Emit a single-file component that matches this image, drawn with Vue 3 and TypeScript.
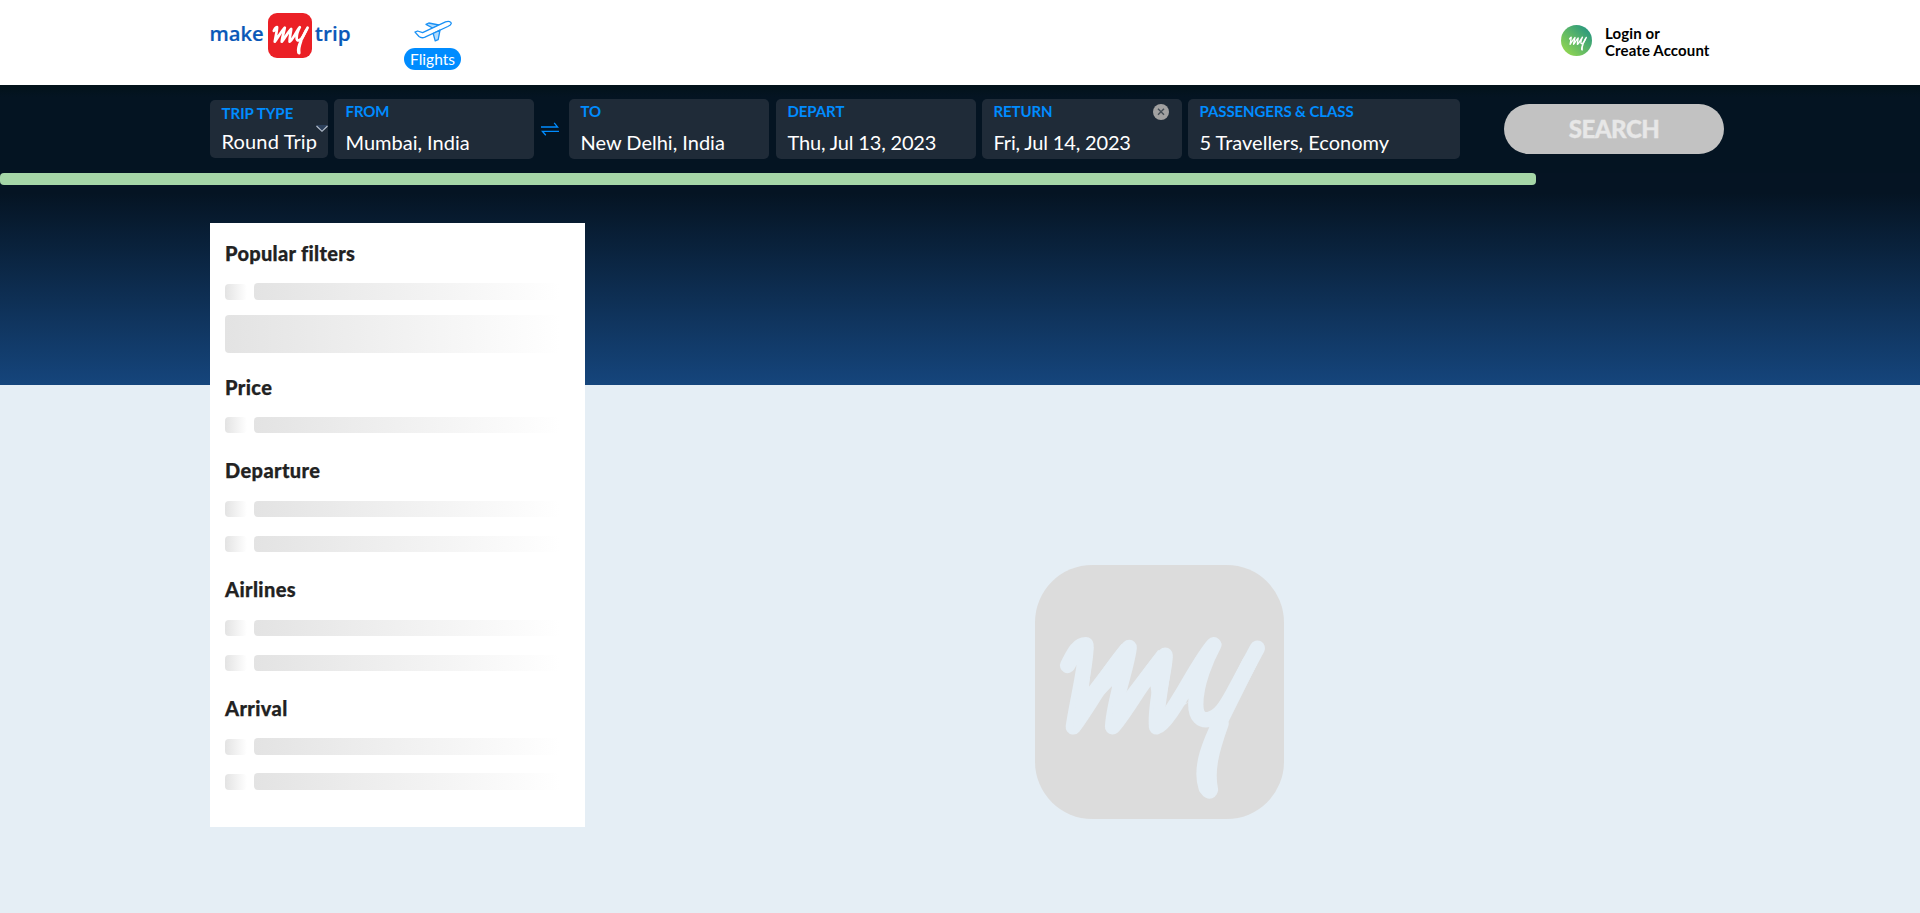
<script setup lang="ts">
interface Field {
  key: string
  label: string
  value: string
}

interface FilterGroup {
  title: string
  kind: string
  rows: number
  block: boolean
}

const route: Field[] = [
  { key: 'to', label: 'TO', value: 'New Delhi, India' },
  { key: 'depart', label: 'DEPART', value: 'Thu, Jul 13, 2023' },
  { key: 'return', label: 'RETURN', value: 'Fri, Jul 14, 2023' },
  { key: 'pax', label: 'PASSENGERS & CLASS', value: '5 Travellers, Economy' },
]

const groups: FilterGroup[] = [
  { title: 'Popular filters', kind: 'popular', rows: 1, block: true },
  { title: 'Price', kind: 'price', rows: 1, block: false },
  { title: 'Departure', kind: 'departure', rows: 2, block: false },
  { title: 'Airlines', kind: 'airlines', rows: 2, block: false },
  { title: 'Arrival', kind: 'arrival', rows: 2, block: false },
]

const progress = 80

const script =
  'M143 346C158 318 170 284 198 284C202 330 172 450 160 530C200 480 270 350 328 292C322 350 282 450 278 530C310 500 380 370 436 315C436 370 404 450 410 530C450 520 530 340 582 284C560 325 528 400 528 462C528 500 545 512 568 508C600 500 618 470 640 430L713 294'
const fill =
  'M180 330L160 530L276 408L278 530L392 408L410 530L507 455L435 485L458 320L415 300L308 440L349 295L305 282L207 410L221 290Z'
const tail = 'M690 336L608 500C572 575 538 650 559 712Q570 728 572 718C560 660 575 600 604 520'
</script>

<template>
  <div class="page">
    <header class="top">
      <svg class="brand" width="144" height="48" viewBox="0 0 144 48">
        <text class="word" x="-0.6" y="29.8" textLength="54.2" lengthAdjust="spacingAndGlyphs">make</text>
        <rect x="58" y="2" width="44" height="45" rx="9" fill="#eb2026" />
        <g transform="translate(55.3 -0.7) scale(.0593)" class="sign">
          <path :d="script" />
          <path :d="tail" />
        </g>
        <text class="word" x="104.8" y="29.8" textLength="35.8" lengthAdjust="spacingAndGlyphs">trip</text>
      </svg>
      <nav class="nav">
        <svg width="38" height="22" viewBox="0 0 38 22" fill="#fff" stroke="#1a91f5" stroke-width="1.3" stroke-linejoin="round">
          <path d="M12 4.4L14.8 3L24.8 5L19 8.2Z" fill="#b5dcfb" />
          <path d="M1 12.1L3.6 11L8.6 12.7L31.5 1.9C34.5 .6 37.6 1.6 37.2 3.6C36.9 4.9 35 5.9 33.8 6.5L11 17.2C8.5 18.2 6.5 17.8 5 16.5Z" />
          <path d="M19.2 13.5L26 10.2L24.2 19.6L21.2 20.9Z" fill="#b5dcfb" />
        </svg>
        <span class="pill">Flights</span>
      </nav>
      <div class="login">
        <svg width="31" height="31" viewBox="0 0 31 31">
          <defs>
            <linearGradient id="avatar" x1="0.1" y1="0.9" x2="0.9" y2="0.1">
              <stop offset="0" stop-color="#93d750" />
              <stop offset="1" stop-color="#26967f" />
            </linearGradient>
          </defs>
          <circle cx="15.5" cy="15.5" r="15.5" fill="url(#avatar)" />
          <g transform="translate(4.4 3.8) scale(.0293)" class="sign">
            <path :d="script" />
            <path :d="tail" />
          </g>
        </svg>
        <p>Login or<br />Create Account</p>
      </div>
    </header>

    <section class="search">
      <div class="field trip">
        <label>TRIP TYPE</label>
        <span>Round Trip</span>
        <svg class="chevron" width="12" height="8" viewBox="0 0 12 8">
          <path d="M0 0H12L6 6Z" fill="#2d415c" />
          <path d="M.5 1L6 6.3L11.5 1" fill="none" stroke="#b9c4d2" stroke-width="1.1" />
        </svg>
      </div>
      <div class="field from">
        <label>FROM</label>
        <span>Mumbai, India</span>
      </div>
      <svg class="swap" width="18" height="14" viewBox="0 0 18 14" fill="none" stroke="#008cff" stroke-width="1.3">
        <path d="M0 5H16.6L13.2 .8" />
        <path d="M18 9.3H1.4L4.8 13.2" />
      </svg>
      <div v-for="f in route" :key="f.key" class="field" :class="f.key">
        <label>{{ f.label }}</label>
        <span>{{ f.value }}</span>
        <svg v-if="f.key === 'return'" class="clear" width="16" height="16" viewBox="0 0 16 16">
          <circle cx="8" cy="8" r="8" fill="#a1a1a1" />
          <path d="M5 4.8L11 10.8M11 4.8L5 10.8" stroke="#444d55" stroke-width="1.4" />
        </svg>
      </div>
      <button class="go">SEARCH</button>
    </section>

    <div class="track"><div class="bar" :style="{ width: progress + '%' }"></div></div>

    <main class="content">
      <aside class="filters">
        <section v-for="g in groups" :key="g.kind" class="group" :class="g.kind">
          <h2>{{ g.title }}</h2>
          <div v-for="n in g.rows" :key="n" class="row"><i class="box"></i><i class="line"></i></div>
          <div v-if="g.block" class="block"></div>
        </section>
      </aside>
      <div class="loader">
        <svg width="249" height="254" viewBox="45 45 748 761" preserveAspectRatio="none">
          <rect x="45" y="45" width="748" height="761" rx="172" fill="#dcdcdc" />
          <g class="sign pale">
            <path :d="script" />
            <path :d="fill" class="solid" />
            <path :d="tail" />
          </g>
        </svg>
      </div>
    </main>
  </div>
</template>

<style>
body {
  margin: 0;
  background: #e5eef5;
}
</style>

<style scoped>
.page {
  box-sizing: border-box;
  height: 913px;
  overflow: hidden;
  font-family: Lato, 'Liberation Sans', sans-serif;
  background: linear-gradient(#051423 193px, #15457c 385px, #e5eef5 385px);
}
.top {
  box-sizing: border-box;
  height: 85px;
  padding: 11px 210px 0;
  display: flex;
  align-items: flex-start;
  background: #fff;
}
.word {
  font: 600 20.5px 'Open Sans', 'Noto Sans', sans-serif;
  fill: #0a58b8;
  stroke: #0a58b8;
  stroke-width: 0.2;
}
.sign {
  fill: none;
  stroke: #fff;
  stroke-width: 46;
  stroke-linecap: round;
  stroke-linejoin: round;
}
.pale {
  stroke: #e5eef5;
}
.solid {
  fill: #e5eef5;
  stroke: none;
}
.nav {
  margin: 9px 0 0 50px;
  width: 57px;
  display: flex;
  flex-direction: column;
  align-items: center;
}
.nav svg {
  margin-left: 1px;
}
.pill {
  margin-top: 6px;
  width: 57px;
  height: 22px;
  border-radius: 11px;
  background: #008cff;
  color: #fff;
  font-size: 15.5px;
  line-height: 23px;
  text-align: center;
}
.login {
  margin: 14px 0 0 auto;
  display: flex;
  width: 149px;
  gap: 13px;
}
.login p {
  margin: 0;
  font-size: 15px;
  font-weight: 700;
  line-height: 17px;
  letter-spacing: 0.12px;
  white-space: nowrap;
  color: #000;
}
.search {
  height: 88px;
  padding: 14px 196px 0 210px;
  box-sizing: border-box;
  display: flex;
  align-items: flex-start;
  background: linear-gradient(#02121a, #041422 12px);
}
.field {
  position: relative;
  box-sizing: border-box;
  width: 200px;
  height: 60px;
  padding: 3px 0 0 11.5px;
  border-radius: 5px;
  background: #1f2b38;
  display: flex;
  flex-direction: column;
  white-space: nowrap;
}
.field label {
  font-size: 15px;
  font-weight: 700;
  line-height: 18px;
  letter-spacing: -0.09px;
  color: #008cff;
}
.field span {
  margin-top: 10px;
  font-size: 20px;
  line-height: 24px;
  color: #fff;
}
.field.trip {
  width: 118px;
  height: 58px;
  margin: 1px 6px 0 0;
  padding-top: 4px;
}
.field.trip label {
  letter-spacing: 0;
}
.field.trip span {
  margin-top: 7px;
  letter-spacing: 0.15px;
}
.chevron {
  position: absolute;
  right: 0;
  top: 25px;
}
.swap {
  margin: 23px 10px 0 7px;
}
.depart {
  margin-left: 7px;
}
.depart span,
.return span {
  letter-spacing: -0.16px;
}
.return,
.pax {
  margin-left: 6px;
}
.pax {
  width: 272px;
}
.clear {
  position: absolute;
  right: 13px;
  top: 5px;
}
.go {
  margin: 5px 0 0 auto;
  width: 220px;
  height: 50px;
  border: 0;
  border-radius: 25px;
  background: #c2c2c2;
  color: #e7e7e7;
  font: 900 24px/50px Lato, sans-serif;
  letter-spacing: -0.5px;
  -webkit-text-stroke: 0.3px #e7e7e7;
  padding: 0;
}
.track {
  height: 12px;
}
.bar {
  height: 12px;
  border-radius: 4px;
  background: #a5d6a7;
}
.content {
  display: flex;
  padding: 38px 0 0 210px;
}
.filters {
  box-sizing: border-box;
  width: 375px;
  height: 604px;
  padding: 18px 15px 0;
  background: #fff;
}
.group {
  height: 119px;
}
.popular {
  height: 134px;
}
.price {
  height: 83px;
}
h2 {
  margin: 0 0 19px;
  font-size: 20px;
  font-weight: 900;
  line-height: 24px;
  letter-spacing: 0.38px;
  -webkit-text-stroke: 0.25px #222;
  color: #222;
}
.popular h2 {
  letter-spacing: 0.3px;
}
.price h2 {
  margin-bottom: 18px;
}
.row {
  display: flex;
  gap: 7px;
  height: 16px;
  margin-bottom: 19px;
}
.box,
.line,
.block {
  height: 16px;
  border-radius: 4px;
  background: linear-gradient(90deg, #e3e3e3, #f2f2f2 54%, #fff);
}
.popular .line,
.arrival .line {
  height: 17px;
  margin-top: -1px;
}
.box {
  width: 22px;
}
.line {
  width: 306px;
}
.block {
  width: 335px;
  height: 38px;
  margin-top: -4px;
}
.loader {
  margin: 342px 0 0 450px;
}
</style>
